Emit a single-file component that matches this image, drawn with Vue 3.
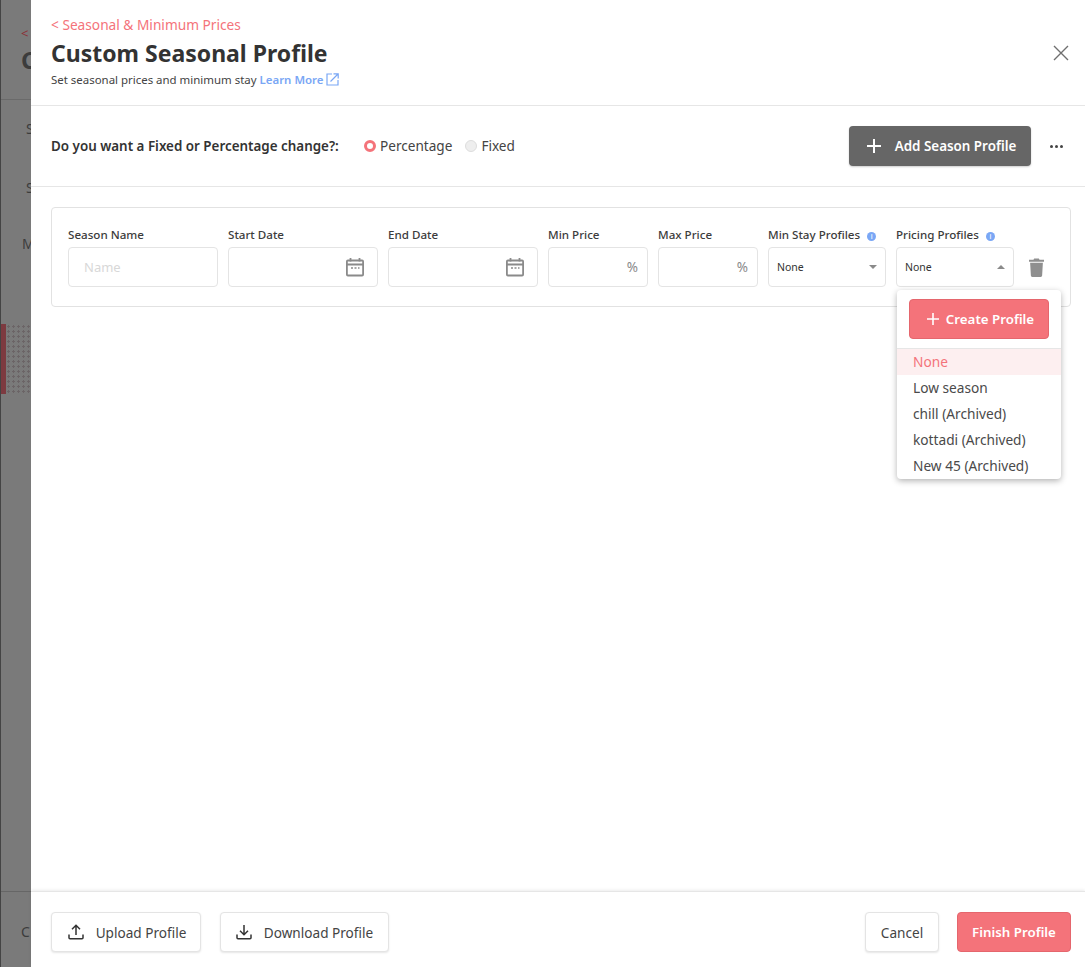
<template>
  <div class="page">
    <aside class="backdrop">
      <span class="ghost-back">&lt;</span>
      <span class="ghost-title">C</span>
      <div class="ghost-line"></div>
      <span class="ghost-item one">S</span>
      <span class="ghost-item two">S</span>
      <span class="ghost-item three">M</span>
      <div class="ghost-active"></div>
      <div class="ghost-foot"><span>C</span></div>
    </aside>

    <main class="drawer">
      <header class="head">
        <div>
          <a class="back">&lt; Seasonal &amp; Minimum Prices</a>
          <h1>Custom Seasonal Profile</h1>
          <p class="sub">
            Set seasonal prices and minimum stay
            <a class="learn">Learn More</a>
            <svg class="ext" width="13" height="13" viewBox="0 0 13 13" fill="none" stroke="#7aa7f5" stroke-width="1.2">
              <path d="M6 1H1v11h11V7" />
              <path d="M4.5 8.5 12 1M7.5 .8H12.2V5.5" />
            </svg>
          </p>
        </div>
        <svg class="close" width="16" height="16" viewBox="0 0 16 16" fill="none" stroke="#6f6f6f" stroke-width="1.4">
          <path d="M1 1l14 14M15 1 1 15" />
        </svg>
      </header>

      <section class="mode">
        <strong class="question">Do you want a Fixed or Percentage change?:</strong>
        <label class="radio"><i class="dot on"></i>Percentage</label>
        <label class="radio"><i class="dot"></i>Fixed</label>
        <button class="btn-dark">
          <svg width="14" height="14" viewBox="0 0 14 14" stroke="#fff" stroke-width="2"><path d="M7 0v14M0 7h14" /></svg>
          Add Season Profile
        </button>
        <span class="more"><i></i><i></i><i></i></span>
      </section>

      <section class="content">
        <div class="card">
          <div class="field w150">
            <label>Season Name</label>
            <div class="box"><span class="placeholder">Name</span></div>
          </div>
          <div class="field w150" v-for="d in dates" :key="d">
            <label>{{ d }}</label>
            <div class="box end">
              <svg width="20" height="20" viewBox="0 0 20 20" fill="none" stroke="#8a8a8a" stroke-width="1.8">
                <rect x="1.9" y="3.5" width="16.2" height="15" rx="1" />
                <path d="M2 7.5h16M5.5 1v3.500M14.500 1v3.500" />
                <path d="M6 11h2M9.500 11h2M13 11h1.500" stroke-width="1.300" />
              </svg>
            </div>
          </div>
          <div class="field w100" v-for="p in prices" :key="p">
            <label>{{ p }}</label>
            <div class="box end"><span class="pct">%</span></div>
          </div>
          <div class="field w118">
            <label>Min Stay Profiles <i class="info">i</i></label>
            <div class="box select"><span>None</span><i class="caret"></i></div>
          </div>
          <div class="field w118 pricing">
            <label>Pricing Profiles <i class="info">i</i></label>
            <div class="box select"><span>None</span><i class="caret up"></i></div>
            <div class="menu">
              <div class="menu-top">
                <button class="btn-red create">
                  <svg width="12" height="12" viewBox="0 0 12 12" stroke="#fff" stroke-width="1.600"><path d="M6 0v12M0 6h12" /></svg>
                  Create Profile
                </button>
              </div>
              <div v-for="(o, i) in options" :key="o" class="opt" :class="{ sel: i === 0 }">{{ o }}</div>
            </div>
          </div>
          <svg class="trash" width="15" height="19" viewBox="0 0 16 20" fill="#8f8f8f">
            <path d="M5.500 .5h5l.7 1.300H16v2H0v-2h4.800zM1.200 5h13.600l-.8 13.500c0 .8-.7 1.500-1.500 1.500H3.500c-.8 0-1.500-.7-1.500-1.500z" />
          </svg>
        </div>
      </section>

      <footer class="foot">
        <button class="btn-white upload">
          <svg width="16" height="16" viewBox="0 0 16 16" fill="none" stroke="#333" stroke-width="1.500">
            <path d="M1 10.500v3.200c0 .6.400 1 1 1h12c.6 0 1-.4 1-1v-3.200M8 11V1.500M4 5.200l4-4 4 4" />
          </svg>
          Upload Profile
        </button>
        <button class="btn-white download">
          <svg width="16" height="16" viewBox="0 0 16 16" fill="none" stroke="#333" stroke-width="1.500">
            <path d="M1 10.500v3.200c0 .6.400 1 1 1h12c.6 0 1-.4 1-1v-3.200M8 1v9.500M4 6.800l4 4 4-4" />
          </svg>
          Download Profile
        </button>
        <button class="btn-white cancel">Cancel</button>
        <button class="btn-red finish">Finish Profile</button>
      </footer>
    </main>
  </div>
</template>

<script setup>
const dates = ["Start Date", "End Date"];
const prices = ["Min Price", "Max Price"];
const options = ["None", "Low season", "chill (Archived)", "kottadi (Archived)", "New 45 (Archived)"];
</script>

<style>
html,
body {
  margin: 0;
  background: #fff;
}
</style>

<style scoped>
.page {
  display: flex;
  height: 967px;
  overflow: hidden;
  font-family: "Noto Sans", "Liberation Sans", sans-serif;
  color: #333;
}

.backdrop {
  width: 30px;
  flex: none;
  background: #7a7a7a;
  border-left: 1px solid #444;
  overflow: hidden;
  display: flex;
  flex-direction: column;
  color: #3c3c3c;
  white-space: nowrap;
}
.ghost-back {
  color: #8c2f36;
  font-size: 13px;
  margin: 24px 0 0 20px;
  line-height: 18px;
}
.ghost-title {
  font-size: 24px;
  font-weight: 700;
  line-height: 30px;
  margin: 3px 0 0 20px;
}
.ghost-line {
  height: 1px;
  background: #6a6a6a;
  margin-top: 24px;
}
.ghost-item {
  font-size: 14px;
  line-height: 20px;
}
.ghost-item.one {
  margin: 19px 0 0 25px;
  height: 59px;
}
.ghost-item.two {
  margin-left: 25px;
  height: 56px;
}
.ghost-item.three {
  margin-left: 21px;
  height: 90px;
}
.ghost-active {
  height: 70px;
  border-left: 5px solid #7d3a40;
  background-color: #7a7a7a;
  background-image: radial-gradient(#6b6466 30%, transparent 35%);
  background-size: 5px 5px;
}
.ghost-foot {
  margin-top: 497px;
  border-top: 1px solid #666;
  padding: 30px 0 0 20px;
  font-size: 14px;
}

.drawer {
  flex: 1;
  min-width: 0;
  display: flex;
  flex-direction: column;
  background: #fff;
}

.head {
  height: 106px;
  flex: none;
  box-sizing: border-box;
  border-bottom: 1px solid #e6e6e6;
  padding: 16px 16px 0 20px;
  display: flex;
  justify-content: space-between;
  align-items: flex-start;
}
.back {
  display: block;
  color: #f4737a;
  font-size: 13.7px;
  line-height: 18px;
}
h1 {
  margin: 3px 0 0;
  font-size: 23px;
  line-height: 32px;
  font-weight: 700;
  color: #333;
}
.sub {
  margin: 3px 0 0;
  font-size: 11.45px;
  line-height: 15px;
  color: #444;
}
.learn {
  color: #7aa7f5;
  font-weight: 600;
}
.ext {
  vertical-align: -2px;
  margin-left: 2px;
}
.close {
  margin-top: 29px;
  margin-right: 0;
}

.mode {
  height: 81px;
  flex: none;
  box-sizing: border-box;
  border-bottom: 1px solid #e6e6e6;
  padding: 0 22px 0 20px;
  display: flex;
  align-items: center;
  font-size: 13.2px;
}
.question {
  font-size: 13.4px;
  font-weight: 600;
  color: #333;
  margin-right: 24px;
  width: 289px;
  white-space: nowrap;
}
.radio {
  display: flex;
  align-items: center;
  gap: 4px;
  margin-right: 13px;
  color: #444;
  font-size: 13.6px;
  font-weight: 400;
}
.dot {
  box-sizing: border-box;
  width: 12px;
  height: 12px;
  border-radius: 50%;
  background: #eee;
  border: 1px solid #ddd;
}
.dot.on {
  background: #fff;
  border: 3.500px solid #f4737a;
}

button {
  font-family: inherit;
  cursor: pointer;
  border-radius: 4px;
  display: flex;
  align-items: center;
  justify-content: center;
  white-space: nowrap;
}
.btn-dark {
  margin-left: auto;
  width: 182px;
  height: 40px;
  background: #666;
  border: 0;
  color: #fff;
  font-size: 13.4px;
  font-weight: 600;
  gap: 14px;
  padding-left: 9px;
  box-shadow: 0 1px 2px rgba(0, 0, 0, 0.2);
}
.more {
  display: flex;
  gap: 2px;
  margin-left: 19px;
}
.more i {
  width: 3px;
  height: 3px;
  border-radius: 50%;
  background: #444;
}

.content {
  flex: 1;
  padding: 20px 14px 0 20px;
}
.card {
  height: 100px;
  box-sizing: border-box;
  border: 1px solid #e2e2e2;
  border-radius: 4px;
  padding: 19px 16px 0;
  display: flex;
  gap: 10px;
  position: relative;
}
.field {
  flex: none;
  display: flex;
  flex-direction: column;
  position: relative;
}
.w150 {
  width: 150px;
}
.w100 {
  width: 100px;
}
.w118 {
  width: 118px;
}
label {
  font-size: 11.6px;
  line-height: 16px;
  height: 20px;
  font-weight: 500;
  color: #3c3c3c;
  white-space: nowrap;
}
.info {
  display: inline-block;
  width: 9px;
  height: 9px;
  margin-left: 4px;
  border-radius: 50%;
  background: #7aa7f5;
  color: #fff;
  font-size: 7px;
  line-height: 9px;
  text-align: center;
  font-style: normal;
  vertical-align: 0;
}
.box {
  height: 40px;
  box-sizing: border-box;
  border: 1px solid #e4e4e4;
  border-radius: 4px;
  display: flex;
  align-items: center;
  padding: 0 12px;
  background: #fff;
}
.box.end {
  justify-content: flex-end;
  padding-right: 12px;
}
.box.select {
  justify-content: space-between;
  padding: 0 8px;
  font-size: 10.500px;
  color: #333;
}
.placeholder {
  font-size: 13px;
  color: #d8d8d8;
  margin-left: 3px;
}
.pct {
  font-size: 13.5px;
  color: #8a8a8a;
  margin-right: -3px;
}
.caret {
  width: 0;
  height: 0;
  border-left: 4px solid transparent;
  border-right: 4px solid transparent;
  border-top: 4px solid #8a8a8a;
}
.caret.up {
  border-top: 0;
  border-bottom: 4px solid #8a8a8a;
}
.trash {
  margin: 31px 0 0 5px;
  flex: none;
}

.menu {
  position: absolute;
  top: 63px;
  left: 1px;
  width: 164px;
  box-sizing: border-box;
  background: #fff;
  border-radius: 4px;
  box-shadow: 0 2px 6px rgba(0, 0, 0, 0.3);
  z-index: 2;
  font-size: 13.7px;
}
.menu-top {
  padding: 9px 12px;
  border-bottom: 1px solid #e6e6e6;
}
.btn-red {
  background: #f4737a;
  border: 1px solid #e5666d;
  color: #fff;
  font-weight: 600;
  font-size: 13.3px;
}
.create {
  width: 140px;
  height: 40px;
  gap: 7px;
  padding-left: 9px;
}
.opt {
  height: 26px;
  line-height: 26px;
  padding-left: 16px;
  color: #4a4a4a;
}
.opt.sel {
  background: #fdeff0;
  color: #f4737a;
}

.foot {
  height: 76px;
  flex: none;
  box-sizing: border-box;
  border-top: 1px solid #e6e6e6;
  box-shadow: 0 -1px 3px rgba(0, 0, 0, 0.08);
  padding: 20px 14px 0 20px;
  display: flex;
  align-items: flex-start;
  gap: 19px;
}
.btn-white {
  height: 40px;
  background: #fff;
  border: 1px solid #e4e4e4;
  color: #444;
  font-size: 13.6px;
  box-shadow: 0 1px 2px rgba(0, 0, 0, 0.1);
}
.upload {
  width: 150px;
  gap: 12px;
  padding-left: 8px;
}
.download {
  width: 169px;
  gap: 12px;
}
.cancel {
  width: 74px;
  margin-left: auto;
  margin-right: -1px;
}
.finish {
  width: 114px;
  height: 40px;
}
</style>
